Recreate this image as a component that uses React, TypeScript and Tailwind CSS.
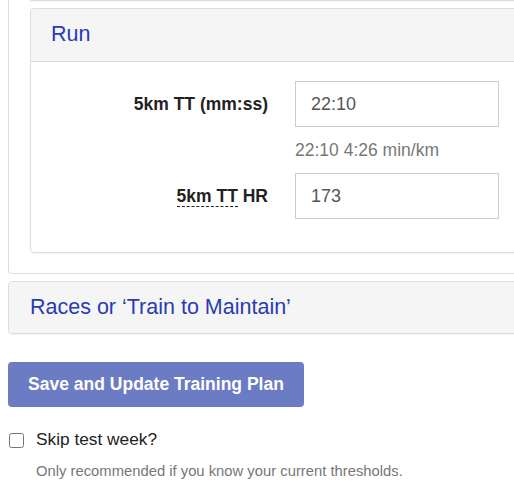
import React from 'react';

const font = { fontFamily: '"Liberation Sans", Arial, sans-serif' };

export default function App() {
    return (
        <div className="w-[514px] h-[490px] overflow-hidden bg-white" style={font}>
            <div className="w-[560px] pl-[8px]">
                {/* outer card, top is scrolled off */}
                <div className="border border-[#dddddd] border-t-0 rounded-b-[4px] pl-[21px] pb-[20px]">
                    <div className="h-px bg-[#dddddd] shadow-[0_1px_1px_rgba(0,0,0,0.05)]" />
                    <div className="mt-[7px] border border-[#dddddd] rounded-[4px] shadow-[0_1px_1px_rgba(0,0,0,0.05)]">
                        <div className="h-[53px] bg-[#f5f5f5] border-b border-[#dddddd] rounded-t-[4px] flex items-center pl-[20px]">
                            <h3 className="text-[21.5px] text-[#2a3bb3] leading-none">Run</h3>
                        </div>
                        <div className="pt-[19px] pb-[33px]">
                            <div className="flex items-center">
                                <label className="w-[237px] text-right text-[17.5px] font-bold text-[#222222]">5km TT (mm:ss)</label>
                                <input
                                    type="text"
                                    defaultValue="22:10"
                                    className="ml-[27px] w-[204px] h-[46px] border border-[#cccccc] px-[15px] text-[18px] text-[#555555] outline-none"
                                />
                            </div>
                            <div className="ml-[264px] mt-[12px] text-[17.5px] text-[#777777] leading-[22px]">22:10 4:26 min/km</div>
                            <div className="flex items-center mt-[12px]">
                                <label className="w-[237px] text-right text-[17.5px] font-bold text-[#222222]">
                                    <abbr title="5km Time Trial" className="no-underline border-b border-dashed border-[#222222]">5km TT</abbr> HR
                                </label>
                                <input
                                    type="text"
                                    defaultValue="173"
                                    className="ml-[27px] w-[204px] h-[46px] border border-[#cccccc] px-[15px] text-[18px] text-[#555555] outline-none"
                                />
                            </div>
                        </div>
                    </div>
                </div>

                <div className="mt-[7px] border border-[#dddddd] rounded-[4px] shadow-[0_1px_1px_rgba(0,0,0,0.05)]">
                    <div className="h-[51px] bg-[#f5f5f5] rounded-[4px] flex items-center pl-[21px]">
                        <h3 className="text-[21.5px] text-[#2a3bb3] leading-none">Races or ‘Train to Maintain’</h3>
                    </div>
                </div>

                <button className="mt-[28px] w-[296px] h-[45px] rounded-[4px] bg-[#6b7bc4] text-white text-[17.5px] font-bold">
                    Save and Update Training Plan
                </button>

                <label className="mt-[20px] flex items-center h-[26px] gap-[12px] pl-px">
                    <input type="checkbox" className="w-[15px] h-[15px] m-0" />
                    <span className="text-[17.3px] text-[#222222]">Skip test week?</span>
                </label>
                <p className="mt-[8px] ml-[28px] text-[14.8px] leading-[21px] text-[#777777]">Only recommended if you know your current thresholds.</p>
            </div>
        </div>
    );
}
